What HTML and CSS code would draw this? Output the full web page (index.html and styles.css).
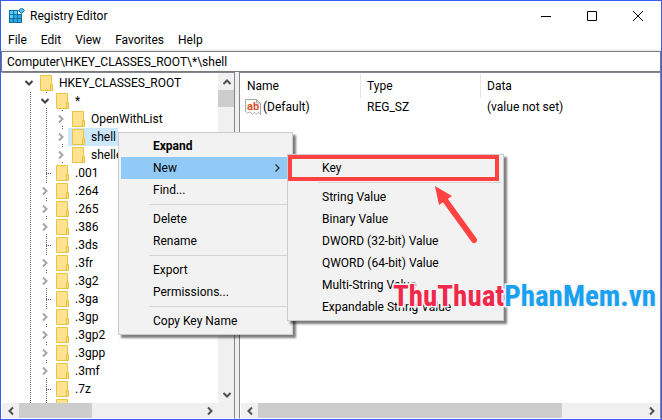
FILE: index.html
```html
<!DOCTYPE html>
<html lang="en">
<head>
    <meta charset="UTF-8">
    <meta name="viewport" content="width=device-width, initial-scale=1.0">
    <title>Registry Editor</title>
    <link rel="stylesheet" href="styles.css">
</head>
<body>

<!-- shared icons -->
<svg class="sprite" aria-hidden="true">
    <symbol id="folder" viewBox="0 0 14 16">
        <path d="M.5.5h11v15H.5z" fill="#ffe391" stroke="#ecc445"/>
        <path d="M10.500 9.500h2v6h-2z" fill="#ffe391" stroke="#e8bd35"/>
    </symbol>
    <symbol id="down" viewBox="0 0 10 10"><path d="M1.500 3 5 6.500 8.500 3" fill="none" stroke="currentColor" stroke-width="2"/></symbol>
    <symbol id="up" viewBox="0 0 10 10"><path d="M1.500 7 5 3.500 8.500 7" fill="none" stroke="currentColor" stroke-width="2"/></symbol>
    <symbol id="right" viewBox="0 0 10 10"><path d="M3 1.500 6.500 5 3 8.500" fill="none" stroke="currentColor" stroke-width="2"/></symbol>
    <symbol id="left" viewBox="0 0 10 10"><path d="M7 1.500 3.500 5 7 8.500" fill="none" stroke="currentColor" stroke-width="2"/></symbol>
</svg>

<div class="window">
    <header class="titlebar">
        <svg class="app-icon" width="16" height="16" viewBox="0 0 16 16">
            <path d="M0 2h9v4h4v9H0z" fill="#0f6ea6"/>
            <path d="M1 3h3v3H1zM5 3h3v3H5zM1 7h3v3H1z" fill="#5bd0f5"/>
            <path d="M5 7h3v3H5zM9 7h3v3H9zM1 11h3v3H1zM5 11h3v3H5zM9 11h3v3H9z" fill="#2fa9dc"/>
            <path d="M12.500 0 15.500 2.500 12.500 5.500 9.500 2.500z" fill="#5bc3e8" stroke="#0f6ea6"/>
        </svg>
        <h1>Registry Editor</h1>
        <button class="caption" aria-label="Minimize"><svg width="10" height="10"><path d="M0 5.500h10" stroke="#000"/></svg></button>
        <button class="caption" aria-label="Maximize"><svg width="10" height="10"><path d="M.5.5h9v9h-9z" fill="none" stroke="#000"/></svg></button>
        <button class="caption" aria-label="Close"><svg width="10" height="10"><path d="M0 0 10 10M10 0 0 10" stroke="#000"/></svg></button>
    </header>

    <nav class="menubar">
        <button>File</button>
        <button>Edit</button>
        <button>View</button>
        <button>Favorites</button>
        <button>Help</button>
    </nav>

    <input class="address" type="text" aria-label="Address" value="Computer\HKEY_CLASSES_ROOT\*\shell">

    <main class="panes">
        <section class="pane tree-pane">
            <div class="tree">
                <ul>
                    <li>
                        <div class="row"><button class="toggle open" aria-label="Collapse"><svg><use href="#down"/></svg></button><span class="key"><svg><use href="#folder"/></svg>HKEY_CLASSES_ROOT</span></div>
                        <ul>
                            <li>
                                <div class="row"><button class="toggle open" aria-label="Collapse"><svg><use href="#down"/></svg></button><span class="key"><svg><use href="#folder"/></svg>*</span></div>
                                <ul>
                                    <li class="row"><button class="toggle" aria-label="Expand"><svg><use href="#right"/></svg></button><span class="key"><svg><use href="#folder"/></svg>OpenWithList</span></li>
                                    <li class="row"><button class="toggle" aria-label="Expand"><svg><use href="#right"/></svg></button><span class="key selected"><svg><use href="#folder"/></svg>shell</span></li>
                                    <li class="row"><button class="toggle" aria-label="Expand"><svg><use href="#right"/></svg></button><span class="key"><svg><use href="#folder"/></svg>shellex</span></li>
                                </ul>
                            </li>
                            <li class="row"><span class="stub"></span><span class="key"><svg><use href="#folder"/></svg>.001</span></li>
                            <li class="row"><button class="toggle" aria-label="Expand"><svg><use href="#right"/></svg></button><span class="key"><svg><use href="#folder"/></svg>.264</span></li>
                            <li class="row"><button class="toggle" aria-label="Expand"><svg><use href="#right"/></svg></button><span class="key"><svg><use href="#folder"/></svg>.265</span></li>
                            <li class="row"><button class="toggle" aria-label="Expand"><svg><use href="#right"/></svg></button><span class="key"><svg><use href="#folder"/></svg>.386</span></li>
                            <li class="row"><span class="stub"></span><span class="key"><svg><use href="#folder"/></svg>.3ds</span></li>
                            <li class="row"><button class="toggle" aria-label="Expand"><svg><use href="#right"/></svg></button><span class="key"><svg><use href="#folder"/></svg>.3fr</span></li>
                            <li class="row"><button class="toggle" aria-label="Expand"><svg><use href="#right"/></svg></button><span class="key"><svg><use href="#folder"/></svg>.3g2</span></li>
                            <li class="row"><span class="stub"></span><span class="key"><svg><use href="#folder"/></svg>.3ga</span></li>
                            <li class="row"><button class="toggle" aria-label="Expand"><svg><use href="#right"/></svg></button><span class="key"><svg><use href="#folder"/></svg>.3gp</span></li>
                            <li class="row"><button class="toggle" aria-label="Expand"><svg><use href="#right"/></svg></button><span class="key"><svg><use href="#folder"/></svg>.3gp2</span></li>
                            <li class="row"><button class="toggle" aria-label="Expand"><svg><use href="#right"/></svg></button><span class="key"><svg><use href="#folder"/></svg>.3gpp</span></li>
                            <li class="row"><button class="toggle" aria-label="Expand"><svg><use href="#right"/></svg></button><span class="key"><svg><use href="#folder"/></svg>.3mf</span></li>
                            <li class="row"><span class="stub"></span><span class="key"><svg><use href="#folder"/></svg>.7z</span></li>
                            <li class="row"><span class="stub"></span><span class="key"><svg><use href="#folder"/></svg></span></li>
                        </ul>
                    </li>
                </ul>
            </div>
            <div class="vscroll">
                <button aria-label="Scroll up"><svg><use href="#up"/></svg></button>
                <div class="track"><div class="thumb"></div></div>
                <button aria-label="Scroll down"><svg><use href="#down"/></svg></button>
            </div>
            <div class="hscroll">
                <button aria-label="Scroll left"><svg><use href="#left"/></svg></button>
                <div class="track"><div class="thumb"></div></div>
                <button aria-label="Scroll right"><svg><use href="#right"/></svg></button>
            </div>
        </section>

        <div class="splitter"></div>

        <section class="pane list-pane">
            <table class="values">
                <thead>
                    <tr><th class="name">Name</th><th class="type">Type</th><th>Data</th></tr>
                </thead>
                <tbody>
                    <tr>
                        <td class="name">
                            <span class="value-name">
                                <svg width="16" height="16" viewBox="0 0 16 16">
                                    <path d="M.5.5h11l4 4v11l-2-2-2 1.500-2-1.500-2 1.500-3-2-2 1-2-1.500z" fill="#fff" stroke="#a8a8a8"/>
                                    <path d="M11.500.5v3.500h4" fill="none" stroke="#a8a8a8"/>
                                    <text x="2" y="11" class="ab">ab</text>
                                </svg>
                                (Default)
                            </span>
                        </td>
                        <td>REG_SZ</td>
                        <td>(value not set)</td>
                    </tr>
                </tbody>
            </table>
            <div class="hscroll">
                <button aria-label="Scroll left"><svg><use href="#left"/></svg></button>
                <div class="track"><div class="thumb"></div></div>
                <button aria-label="Scroll right"><svg><use href="#right"/></svg></button>
            </div>
        </section>
    </main>

    <div class="menu context-menu">
        <button class="default">Expand</button>
        <div class="has-submenu">
            <button class="active">New<svg viewBox="0 0 10 10"><path d="M3.500 1.500 7 5 3.500 8.500" fill="none" stroke="#303030" stroke-width="1.300"/></svg></button>
            <div class="menu submenu">
                <button class="marked">Key</button>
                <hr>
                <button>String Value</button>
                <button>Binary Value</button>
                <button>DWORD (32-bit) Value</button>
                <button>QWORD (64-bit) Value</button>
                <button>Multi-String Value</button>
                <button>Expandable String Value</button>
                <svg class="arrow" width="44" height="58" viewBox="0 0 44 58">
                    <path d="M11 14 40 54" stroke="#ff4343" stroke-width="6" stroke-linecap="round"/>
                    <path d="M1 0 18 10 5 19z" fill="#ff4343"/>
                </svg>
            </div>
        </div>
        <button>Find...</button>
        <hr>
        <button>Delete</button>
        <button>Rename</button>
        <hr>
        <button>Export</button>
        <button>Permissions...</button>
        <hr>
        <button>Copy Key Name</button>
    </div>

    <div class="watermark"><span>ThuThuat</span>PhanMem.vn</div>
</div>

</body>
</html>
```

FILE: styles.css
```css
* {
    box-sizing: border-box;
}
body {
    margin: 0;
    font-family: Roboto, "Noto Sans", sans-serif;
    font-size: 12px;
    line-height: 18px;
    color: #000;
}
button {
    font: inherit;
    color: inherit;
    background: none;
    border: none;
    padding: 0;
}
ul {
    list-style: none;
    margin: 0;
    padding: 0;
}
.sprite {
    display: none;
}
.window {
    position: relative;
    display: flex;
    flex-direction: column;
    height: 100vh;
    border: 1px solid #3f5bf5;
    background: #fff;
    overflow: hidden;
}

/* title bar and menu bar */
.titlebar {
    display: flex;
    align-items: center;
    height: 30px;
    padding-left: 8px;
}
.titlebar h1 {
    flex: 1;
    margin: 0 0 0 5px;
    font-size: 12px;
    font-weight: normal;
}
.caption {
    display: flex;
    align-items: center;
    justify-content: center;
    width: 46px;
    height: 28px;
}
.menubar {
    display: flex;
    gap: 14px;
    height: 20px;
    padding-left: 7px;
    border-bottom: 2px solid #f0f0f0;
}
.address {
    height: 21px;
    padding: 0 5px;
    border: 1px solid #7a7a7a;
    font: inherit;
    outline: none;
}

/* panes */
.panes {
    flex: 1;
    display: grid;
    grid-template-columns: 234px 4px 1fr;
    min-height: 0;
}
.pane {
    border: 1px solid #828790;
    border-bottom-color: #fff;
    min-height: 0;
    min-width: 0;
}
.splitter {
    background: #f0f0f0;
}
.tree-pane {
    display: grid;
    grid-template-columns: 1fr 16px;
    grid-template-rows: 1fr 15px;
    border-left-color: #fff;
}
.list-pane {
    display: flex;
    flex-direction: column;
}

/* tree, with dotted lines that break at each toggle */
.tree {
    overflow: hidden;
    padding: 1px 0 0 20px;
}
.tree ul ul {
    padding-left: 16px;
}
.tree ul ul,
.tree ul ul li {
    background: repeating-linear-gradient(#606060 0 1px, #fff 1px 2px) 8px 0 / 1px 100% no-repeat;
}
.row {
    display: flex;
    height: 18px;
    white-space: nowrap;
}
.toggle {
    display: flex;
    align-items: center;
    justify-content: center;
    width: 14px;
    height: 14px;
    margin-top: 2px;
    background: #fff;
    color: #a6a6a6;
}
.toggle.open {
    color: #404040;
}
.toggle svg,
.hscroll svg,
.vscroll svg,
.menu button svg {
    width: 10px;
    height: 10px;
}
.stub {
    width: 14px;
    background: repeating-linear-gradient(90deg, #606060 0 1px, #fff 1px 2px) 8px 9px / 6px 1px no-repeat;
}
.key {
    display: flex;
    align-items: center;
    gap: 5px;
    padding: 0 2px 0 4px;
}
.key svg {
    width: 14px;
    height: 16px;
}
.selected {
    background: #cce8ff;
}

/* scroll bars */
.vscroll,
.hscroll {
    display: flex;
    background: #f0f0f0;
    color: #505050;
}
.vscroll {
    flex-direction: column;
}
.hscroll {
    height: 15px;
}
.tree-pane .hscroll {
    grid-column: 1 / 3;
    padding-right: 16px;
}
.list-pane .hscroll {
    margin-left: 1px;
}
.hscroll button,
.vscroll button {
    display: flex;
    align-items: center;
    justify-content: center;
    width: 17px;
    height: 17px;
}
.hscroll button {
    height: 15px;
}
.track {
    flex: 1;
}
.thumb {
    background: #cdcdcd;
}
.vscroll .thumb {
    height: 17px;
}
.hscroll .thumb {
    height: 100%;
    width: 40%;
}
.list-pane .thumb {
    width: 79%;
}

/* value list */
.values {
    flex: 1;
    display: block;
    border-spacing: 0;
    margin: 1px 0 0 1px;
}
.values th,
.values td {
    padding: 0 6px;
    text-align: left;
    font-weight: normal;
    white-space: nowrap;
}
.values th {
    height: 24px;
}
.values .name,
.values .type {
    width: 120px;
}
th.name,
th.type {
    border-right: 1px solid #e5e5e5;
}
.values td.name {
    padding: 0 0 0 4px;
}
.value-name {
    display: flex;
    align-items: center;
    gap: 2px;
}
.ab {
    font-size: 11px;
    font-weight: bold;
    fill: #d9502e;
}

/* menus */
.menu {
    position: absolute;
    padding: 2px;
    border: 1px solid #ccc;
    background: #f2f2f2;
    box-shadow: 3px 3px 2px rgba(0, 0, 0, 0.5);
}
.context-menu {
    left: 117px;
    top: 131px;
    width: 175px;
}
.submenu {
    left: 166px;
    top: -3px;
    width: 217px;
}
.has-submenu {
    position: relative;
}
.menu button {
    display: flex;
    align-items: center;
    justify-content: space-between;
    width: 100%;
    height: 22px;
    padding: 0 8px 0 32px;
    white-space: nowrap;
}
.menu .default {
    font-weight: bold;
}
.menu .active {
    background: #91c9f7;
}
.menu hr {
    height: 1px;
    margin: 3px 0 3px 28px;
    border: none;
    background: #d4d4d4;
}
.menu .marked {
    width: calc(100% - 4px);
    outline: 4px solid #ff4343;
    outline-offset: -2px;
}
.submenu .arrow {
    position: absolute;
    left: 146px;
    top: 31px;
}
.watermark {
    position: absolute;
    right: 5px;
    top: 275px;
    font-family: "Roboto Condensed", Roboto, sans-serif;
    font-size: 29px;
    line-height: 40px;
    font-weight: bold;
    color: #17a1f0;
    -webkit-text-stroke: 3px #f4f4f4;
    paint-order: stroke fill;
}
.watermark span {
    color: #f1284b;
}
```
